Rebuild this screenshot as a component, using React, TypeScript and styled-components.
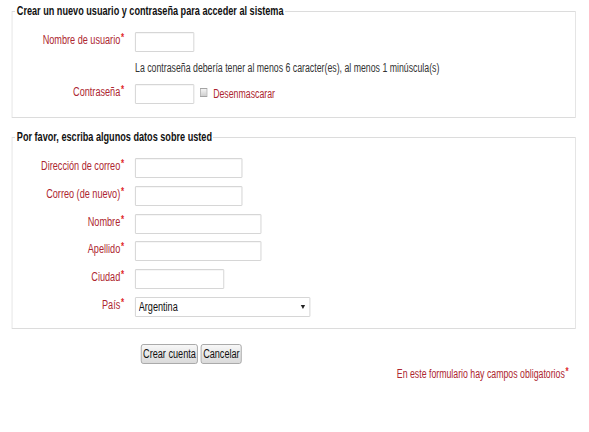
import React from "react";
import styled, { createGlobalStyle } from "styled-components";

const GlobalStyle = createGlobalStyle`
  html, body {
    margin: 0;
    padding: 0;
    background: #ffffff;
  }
  body {
    font-family: "Liberation Sans", Arial, sans-serif;
    font-size: 12px;
    color: #222;
    overflow: hidden;
  }
`;

/* The reference capture is horizontally squashed; the whole page is laid
   out in flow and then compressed along x as one unit. */
const Page = styled.div`
  width: 807px;
  box-sizing: border-box;
  padding: 4px 18px 0 16px;
  transform: scaleX(0.73);
  transform-origin: 0 0;
`;

const Fieldset = styled.fieldset<{ $gap?: number; $bottom?: number }>`
  margin: 0 0 ${(p) => p.$gap ?? 0}px;
  padding: 14px 0 ${(p) => p.$bottom ?? 12}px;
  border: 1px solid #dcdcdc;
  min-width: 0;
`;

const Legend = styled.legend`
  margin-left: 4px;
  padding: 0 2px;
  font-weight: bold;
  font-size: 12.5px;
  line-height: 14px;
  color: #111;
`;

const Rows = styled.div<{ $gap: number }>`
  display: flex;
  flex-direction: column;
  gap: ${(p) => p.$gap}px;
`;

const Row = styled.div`
  display: grid;
  grid-template-columns: 153px 1fr;
  column-gap: 15px;
  align-items: start;
  min-height: 20px;
`;

const HelpRow = styled(Row)`
  min-height: 0;
`;

const Label = styled.label`
  text-align: right;
  color: #ad2630;
  font-size: 12.5px;
  line-height: 14px;
  padding-top: 1px;
  white-space: nowrap;
`;

const Req = styled.span`
  color: #e0252b;
  font-size: 11px;
  font-weight: bold;
  margin-left: 1px;
  vertical-align: 3px;
  line-height: 0;
`;

const Control = styled.div`
  display: flex;
  align-items: center;
  gap: 8px;
`;

const TextInput = styled.input<{ $w: number }>`
  box-sizing: border-box;
  width: ${(p) => p.$w}px;
  height: 20px;
  margin: 0;
  padding: 0 4px;
  border: 1px solid #cfcfcf;
  border-radius: 1px;
  box-shadow: inset 0 1px 1px rgba(0, 0, 0, 0.04);
  font: inherit;
  background: #fff;
`;

const Help = styled.div`
  line-height: 16px;
  color: #333;
`;

const FakeCheckbox = styled.span`
  display: inline-block;
  box-sizing: border-box;
  width: 10px;
  height: 9px;
  margin-top: -3px;
  border: 1px solid #a4a4a4;
  background: linear-gradient(#f4f4f4, #cfcfcf);
`;

const Unmask = styled.span`
  color: #ad2630;
  line-height: 14px;
`;

const SelectWrap = styled.div`
  position: relative;
  width: 240px;
  height: 20px;
`;

const Select = styled.select`
  appearance: none;
  -webkit-appearance: none;
  box-sizing: border-box;
  width: 100%;
  height: 20px;
  margin: 0;
  padding: 0 4px;
  border: 1px solid #cfcfcf;
  border-radius: 1px;
  background: #fff;
  font: inherit;
  font-size: 12.5px;
  color: #111;
`;

const Caret = styled.span`
  position: absolute;
  right: 7px;
  top: 8px;
  width: 0;
  height: 0;
  border-left: 3px solid transparent;
  border-right: 3px solid transparent;
  border-top: 4px solid #222;
  pointer-events: none;
`;

const Buttons = styled.div`
  display: flex;
  gap: 4px;
  margin: 15px 0 0 177px;
`;

const Button = styled.button`
  box-sizing: border-box;
  height: 20px;
  margin: 0;
  padding: 0 2px;
  border: 1px solid #9c9c9c;
  border-radius: 3px;
  background: linear-gradient(#f7f7f7, #dadada);
  font: inherit;
  font-size: 12.5px;
  color: #111;
`;

const Footer = styled.div`
  margin-top: 3px;
  padding-right: 10px;
  text-align: right;
  line-height: 14px;
  color: #ad2630;
`;

type Field = { label: string; width: number };

const personal: Field[] = [
  { label: "Dirección de correo", width: 147 },
  { label: "Correo (de nuevo)", width: 147 },
  { label: "Nombre", width: 173 },
  { label: "Apellido", width: 173 },
  { label: "Ciudad", width: 122 },
];

export default function App() {
  return (
    <>
      <GlobalStyle />
      <Page>
        <Fieldset $gap={12} $bottom={13}>
          <Legend>Crear un nuevo usuario y contraseña para acceder al sistema</Legend>
          <Rows $gap={8}>
            <Row>
              <Label>
                Nombre de usuario<Req>*</Req>
              </Label>
              <Control>
                <TextInput $w={81} />
              </Control>
            </Row>
            <HelpRow>
              <span />
              <Help>
                La contraseña debería tener al menos 6 caracter(es), al menos 1 minúscula(s)
              </Help>
            </HelpRow>
            <Row>
              <Label>
                Contraseña<Req>*</Req>
              </Label>
              <Control>
                <TextInput $w={81} type="password" />
                <FakeCheckbox />
                <Unmask>Desenmascarar</Unmask>
              </Control>
            </Row>
          </Rows>
        </Fieldset>

        <Fieldset $bottom={11}>
          <Legend>Por favor, escriba algunos datos sobre usted</Legend>
          <Rows $gap={7.8}>
            {personal.map((f) => (
              <Row key={f.label}>
                <Label>
                  {f.label}
                  <Req>*</Req>
                </Label>
                <Control>
                  <TextInput $w={f.width} />
                </Control>
              </Row>
            ))}
            <Row>
              <Label>
                País<Req>*</Req>
              </Label>
              <Control>
                <SelectWrap>
                  <Select defaultValue="AR">
                    <option value="AR">Argentina</option>
                  </Select>
                  <Caret />
                </SelectWrap>
              </Control>
            </Row>
          </Rows>
        </Fieldset>

        <Buttons>
          <Button>Crear cuenta</Button>
          <Button>Cancelar</Button>
        </Buttons>

        <Footer>
          En este formulario hay campos obligatorios<Req>*</Req>
        </Footer>
      </Page>
    </>
  );
}
